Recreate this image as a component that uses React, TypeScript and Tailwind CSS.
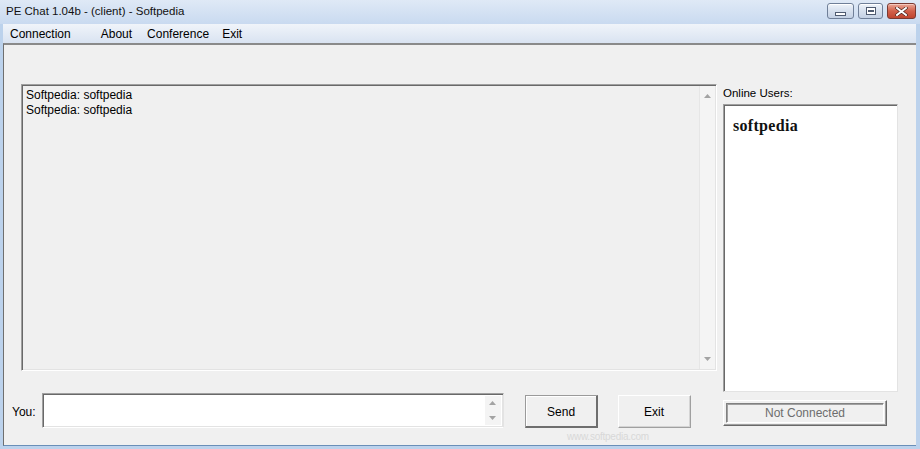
import React from "react"

const font = { fontFamily: '"Liberation Sans", Arial, sans-serif' }

function Tri({ up }: { up?: boolean }) {
  return (
    <svg width="7" height="4" viewBox="0 0 7 4">
      <path d={up ? "M3.5 0 L7 4 L0 4 Z" : "M0 0 L7 0 L3.5 4 Z"} fill="#a3a3a3" />
    </svg>
  )
}

function WinButton({ kind }: { kind: "min" | "max" | "close" }) {
  if (kind === "close") {
    return (
      <div className="w-[29px] h-[16px] rounded-[3px] border border-[#7a3a32] bg-gradient-to-b from-[#e9a899] via-[#d2604a] to-[#c0452f] flex items-center justify-center shadow-[inset_0_1px_0_#f5c8bd]">
        <svg width="13" height="9" viewBox="0 0 13 9">
          <path d="M2 1 L11 8 M11 1 L2 8" stroke="#3d1a14" strokeWidth="3.2" strokeLinecap="square" />
          <path d="M2 1 L11 8 M11 1 L2 8" stroke="#ffffff" strokeWidth="2" strokeLinecap="square" />
        </svg>
      </div>
    )
  }
  return (
    <div
      className={
        (kind === "min" ? "w-[27px]" : "w-[25px]") +
        " h-[16px] rounded-[3px] border border-[#6f7f98] bg-gradient-to-b from-[#eef3fa] via-[#d6e0ee] to-[#c4d1e4] flex items-center justify-center shadow-[inset_0_1px_0_#ffffff]"
      }
    >
      {kind === "min" ? (
        <div className="w-[11px] h-[4px] mt-[5px] bg-white border border-[#4f5b70]" />
      ) : (
        <div className="w-[10px] h-[8px] bg-white border border-[#4f5b70] flex items-center justify-center">
          <div className="w-[6px] h-[2px] border border-[#4f5b70]" />
        </div>
      )}
    </div>
  )
}

export default function App() {
  return (
    <div className="w-[920px] h-[449px] overflow-hidden bg-[#c7d8ee] flex flex-col text-black" style={font}>
      {/* title bar */}
      <div className="h-[24px] flex items-center justify-between pl-[6px] pr-[4px] bg-gradient-to-b from-[#dfe9f6] to-[#c9daf0]">
        <span className="text-[11.5px] text-[#111]">PE Chat 1.04b - (client) - Softpedia</span>
        <div className="flex items-start gap-[4px] -mt-[2px]">
          <WinButton kind="min" />
          <WinButton kind="max" />
          <WinButton kind="close" />
        </div>
      </div>

      {/* frame */}
      <div className="flex-1 flex flex-col border-l-[3px] border-r-[4px] border-b-[3px] border-[#bcd2ec]">
        {/* menu bar */}
        <div className="h-[19px] flex items-center text-[12px] bg-gradient-to-b from-[#f0f4fa] to-[#d9e3f1]">
          <span className="ml-[7px]">Connection</span>
          <span className="ml-[30px]">About</span>
          <span className="ml-[15px]">Conference</span>
          <span className="ml-[13px]">Exit</span>
        </div>

        {/* client area */}
        <div className="flex-1 flex bg-[#f0f0f0] border-t-2 border-l border-t-[#8a8a8a] border-l-[#6f6f6f] border-b border-b-[#6a8fb8] text-[12px]">
          <div className="w-[713px] flex flex-col">
            {/* chat log */}
            <div className="mt-[39px] ml-[17px] w-[696px] h-[287px] flex border border-t-[#a0a0a0] border-l-[#a0a0a0] border-b-white border-r-white shadow-[inset_1px_1px_0_#696969,inset_-1px_-1px_0_#e3e3e3] bg-[#f0f0f0]">
              <div className="flex-1 pl-[4px] pt-[3px] leading-[15px]">
                <div>Softpedia: softpedia</div>
                <div>Softpedia: softpedia</div>
              </div>
              <div className="w-[16px] my-[1px] mr-[1px] bg-[#f4f4f4] border-l border-[#e6e6e6] flex flex-col justify-between items-center py-[8px]">
                <Tri up />
                <Tri />
              </div>
            </div>

            {/* input row */}
            <div className="mt-[22px] flex items-start">
              <span className="ml-[8px] mt-[10px]">You:</span>
              <div className="ml-[6px] w-[462px] h-[35px] flex bg-white border border-t-[#a0a0a0] border-l-[#a0a0a0] border-b-white border-r-[#e3e3e3] shadow-[inset_1px_1px_0_#696969,inset_-1px_-1px_0_#e3e3e3]">
                <div className="flex-1" />
                <div className="w-[16px] my-[2px] mr-[2px] bg-[#f4f4f4] flex flex-col justify-between items-center py-[5px]">
                  <Tri up />
                  <Tri />
                </div>
              </div>
              <button className="ml-[21px] mt-[2px] w-[73px] h-[33px] bg-[#f0f0f0] border border-[#6e6e6e] border-t-[#9a9a9a] border-l-[#9a9a9a] shadow-[inset_-1px_-1px_0_#6e6e6e,inset_1px_1px_0_#ffffff] text-[12px]">
                Send
              </button>
              <button className="ml-[20px] mt-[2px] w-[73px] h-[33px] bg-[#f0f0f0] border border-t-white border-l-white border-b-[#a0a0a0] border-r-[#a0a0a0] shadow-[inset_-1px_-1px_0_#d4d4d4] text-[12px]">
                Exit
              </button>
            </div>
            <div className="ml-[563px] mt-[1px] text-[10px] text-[#d8d8d8] tracking-tight">www.softpedia.com</div>
          </div>

          {/* right column */}
          <div className="ml-[6px] w-[176px] flex flex-col">
            <span className="mt-[41px] leading-[14px] text-[11.5px]">Online Users:</span>
            <div className="mt-[4px] w-[175px] h-[288px] bg-white border border-t-[#a0a0a0] border-l-[#a0a0a0] border-b-[#e3e3e3] border-r-[#e3e3e3] shadow-[inset_1px_1px_0_#696969] pl-[9px] pt-[9px]">
              <span
                className="text-[16px] font-bold tracking-[0.3px] text-[#111]"
                style={{ fontFamily: '"Liberation Serif", "Times New Roman", serif' }}
              >
                softpedia
              </span>
            </div>
            <div className="mt-[8px] w-[164px] h-[26px] border border-t-white border-l-white border-b-[#696969] border-r-[#696969] shadow-[inset_-1px_-1px_0_#a0a0a0] p-[2px]">
              <div className="w-full h-full flex items-center justify-center text-[#6d6d6d] border border-t-[#808080] border-l-[#808080] border-b-white border-r-white shadow-[inset_1px_1px_0_#a0a0a0]">
                Not Connected
              </div>
            </div>
          </div>
        </div>
      </div>
    </div>
  )
}
